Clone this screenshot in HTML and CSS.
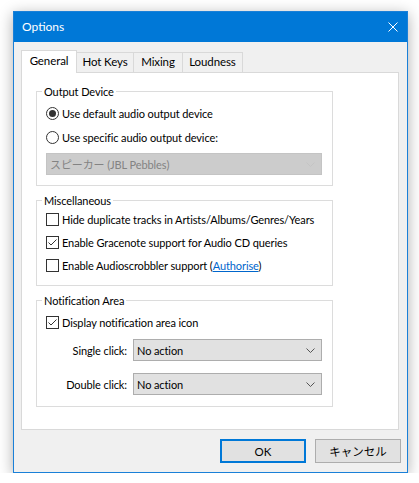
FILE: index.html
```html
<!DOCTYPE html>
<html lang="en">
<head>
<meta charset="utf-8">
<title>Options</title>
<link rel="stylesheet" href="styles.css">
</head>
<body>
<div class="window">
  <div class="titlebar">
    <span class="title">Options</span>
    <svg class="close" width="10" height="10" viewBox="0 0 10 10"><path d="M0.5 0.5 L9.5 9.5 M9.5 0.5 L0.5 9.5" stroke="#fff" stroke-width="1" fill="none"/></svg>
  </div>
  <div class="content">
    <div class="tabs">
      <div class="tab tab-active tab-general">General</div>
      <div class="tab tab-hotkeys">Hot Keys</div>
      <div class="tab tab-mixing">Mixing</div>
      <div class="tab tab-loudness">Loudness</div>
    </div>
    <div class="panel">
      <fieldset class="group group-output">
        <legend>Output Device</legend>
        <div class="opt opt-r1"><span class="radio radio-on"></span><span class="lbl">Use default audio output device</span></div>
        <div class="opt opt-r2"><span class="radio"></span><span class="lbl">Use specific audio output device:</span></div>
        <div class="select select-disabled select-device">
          <span class="select-text">スピーカー (JBL Pebbles)</span>
          <svg class="chev" width="9" height="5" viewBox="0 0 9 5"><path d="M0.5 0.5 L4.5 4.5 L8.5 0.5" stroke="#c4c4c4" fill="none"/></svg>
        </div>
      </fieldset>
      <fieldset class="group group-misc">
        <legend>Miscellaneous</legend>
        <div class="opt opt-c1"><span class="check"></span><span class="lbl">Hide duplicate tracks in Artists/Albums/Genres/Years</span></div>
        <div class="opt opt-c2"><span class="check"><svg width="11" height="11" viewBox="0 0 11 11"><path d="M1.5 5.5 L4 8 L9.5 2.5" stroke="#333" stroke-width="1" fill="none"/></svg></span><span class="lbl">Enable Gracenote support for Audio CD queries</span></div>
        <div class="opt opt-c3"><span class="check"></span><span class="lbl">Enable Audioscrobbler support (<a class="link" href="#">Authorise</a>)</span></div>
      </fieldset>
      <fieldset class="group group-notify">
        <legend>Notification Area</legend>
        <div class="opt opt-n1"><span class="check"><svg width="11" height="11" viewBox="0 0 11 11"><path d="M1.5 5.5 L4 8 L9.5 2.5" stroke="#333" stroke-width="1" fill="none"/></svg></span><span class="lbl">Display notification area icon</span></div>
        <div class="field field-single">
          <span class="field-label">Single click:</span>
          <div class="select select-action">
            <span class="select-text">No action</span>
            <svg class="chev" width="9" height="5" viewBox="0 0 9 5"><path d="M0.5 0.5 L4.5 4.5 L8.5 0.5" stroke="#555" fill="none"/></svg>
          </div>
        </div>
        <div class="field field-double">
          <span class="field-label">Double click:</span>
          <div class="select select-action">
            <span class="select-text">No action</span>
            <svg class="chev" width="9" height="5" viewBox="0 0 9 5"><path d="M0.5 0.5 L4.5 4.5 L8.5 0.5" stroke="#555" fill="none"/></svg>
          </div>
        </div>
      </fieldset>
    </div>
    <div class="buttons">
      <button class="btn btn-default">OK</button>
      <button class="btn">キャンセル</button>
    </div>
  </div>
</div>
</body>
</html>
```

FILE: styles.css
```css
* { box-sizing: border-box; }

html, body {
  margin: 0;
  background: #ffffff;
}

body {
  padding: 11px 0 0 13px;
  font-family: Lato, "Noto Sans CJK JP", sans-serif;
  font-size: 11px;
  letter-spacing: -0.1px;
  color: #000;
}

.window {
  width: 395px;
  height: 462px;
  border: 1px solid #1a80d8;
  background: #f0f0f0;
  box-shadow: 0 3px 14px rgba(0, 0, 0, 0.32);
  display: flex;
  flex-direction: column;
}

.titlebar {
  height: 30px;
  background: #0078d7;
  display: flex;
  align-items: center;
  justify-content: space-between;
  padding: 0 9px 0 8px;
  flex: none;
}

.title {
  color: #fff;
  font-size: 12px;
  line-height: 16px;
  letter-spacing: 0;
}

.close { display: block; }

.content {
  padding: 8px 8px 9px 7px;
}

.tabs {
  display: flex;
  align-items: flex-end;
  height: 22px;
}

.tab {
  height: 20px;
  line-height: 18px;
  text-align: center;
  border: 1px solid #d9d9d9;
  border-bottom: none;
  background: #f0f0f0;
  margin-left: -1px;
  white-space: nowrap;
  font-size: 11.5px;
}

.tab-active {
  height: 23px;
  line-height: 20px;
  margin-bottom: -1px;
  margin-left: 0;
  background: #fff;
  position: relative;
  z-index: 1;
}

.tab-general { width: 56px; }
.tab-hotkeys { width: 58px; }
.tab-mixing { width: 50px; }
.tab-loudness { width: 61px; }

.panel {
  width: 378px;
  background: #fff;
  border: 1px solid #d9d9d9;
  padding: 10px 0 22px 14px;
}

.group {
  margin: 0;
  width: 297px;
  border: 1px solid #dcdcdc;
  padding: 0;
  min-inline-size: 0;
}

.group legend {
  margin-left: 5px;
  padding: 0 2px;
  font-size: 11px;
  line-height: 17px;
}

.group-misc, .group-notify { margin-top: 6px; }

.group-output { padding-top: 3px; padding-bottom: 10px; }
.group-misc { padding-top: 0; padding-bottom: 10px; }
.group-notify { padding-top: 3px; padding-bottom: 11px; }

.opt {
  height: 20px;
  display: flex;
  align-items: center;
  gap: 3px;
  margin-left: 9px;
  white-space: nowrap;
}

.opt-r2 { margin-top: 4px; }
.opt-c2, .opt-c3 { margin-top: 3px; }

.radio {
  width: 13px;
  height: 13px;
  border: 1px solid #333;
  border-radius: 50%;
  background: #fff;
  display: flex;
  align-items: center;
  justify-content: center;
  flex: none;
}

.radio-on::after {
  content: "";
  width: 7px;
  height: 7px;
  border-radius: 50%;
  background: #333;
}

.check {
  width: 13px;
  height: 13px;
  border: 1px solid #333;
  background: #fff;
  flex: none;
  display: flex;
}

.check svg { display: block; }

.link {
  color: #0066cc;
  text-decoration: underline;
}

.select {
  height: 22px;
  border: 1px solid #adadad;
  background: #e1e1e1;
  display: flex;
  align-items: center;
  justify-content: space-between;
  padding: 0 6px 0 3px;
  white-space: nowrap;
}

.select-device {
  width: 276px;
  margin: 6px 0 0 9px;
}

.select-disabled {
  background: #cccccc;
  border-color: #c4c4c4;
  color: #838383;
}

.chev { display: block; flex: none; }

.field {
  display: flex;
  align-items: center;
  gap: 6px;
  margin-left: 9px;
}

.field-single { margin-top: 7px; }
.field-double { margin-top: 12px; }

.field-label {
  width: 81px;
  text-align: right;
  white-space: nowrap;
}

.select-action { width: 189px; }

.buttons {
  display: flex;
  justify-content: flex-end;
  gap: 9px;
  margin-top: 9px;
  margin-right: -2px;
}

.btn {
  width: 86px;
  height: 24px;
  font-family: Lato, "Noto Sans CJK JP", sans-serif;
  font-size: 11.5px;
  color: #000;
  background: #e1e1e1;
  border: 1px solid #adadad;
  padding: 0;
  margin: 0;
}

.btn-default {
  border: 2px solid #0078d7;
}
```
